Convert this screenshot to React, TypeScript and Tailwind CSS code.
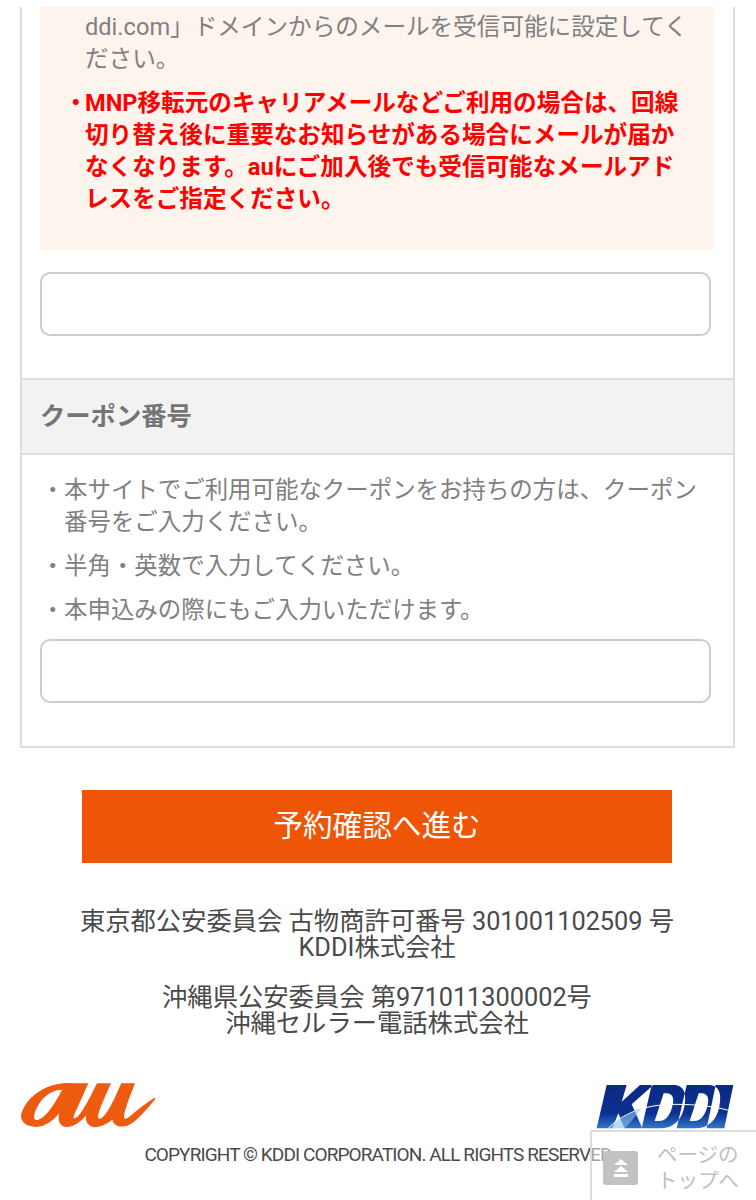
const coupons = [
  "本サイトでご利用可能なクーポンをお持ちの方は、クーポン番号をご入力ください。",
  "半角・英数で入力してください。",
  "本申込みの際にもご入力いただけます。",
];

export default function App() {
  return (
    <div className="w-[756px] h-[1200px] relative overflow-hidden bg-white pt-[7px] font-['Roboto','Noto_Sans_CJK_JP',sans-serif] text-[23.45px] leading-[32px] text-[#808080]">
      <div className="mx-5 w-[715px] border-x-2 border-b-2 border-[#dddddd] h-[741px]">
        <div className="mx-[18px] h-[243px] w-[674px] bg-[#fef4ee] pl-[24px] pr-[24px] text-[23.6px]">
          <p className="pt-[4px] pl-[21px]">ddi.com」ドメインからのメールを受信可能に設定してください。</p>
          <div className="mt-[12px] flex font-bold text-[#ff0000]">
            <span className="w-[21px] shrink-0">・</span>
            <p>MNP移転元のキャリアメールなどご利用の場合は、回線切り替え後に重要なお知らせがある場合にメールが届かなくなります。auにご加入後でも受信可能なメールアドレスをご指定ください。</p>
          </div>
        </div>
        <div className="mx-[18px] mt-[22px] h-[64px] w-[671px] rounded-[10px] border-2 border-[#cccccc] bg-white" />
        <div className="mt-[42px] h-[77px] border-y-2 border-[#dddddd] bg-[#f2f2f2] pl-[18px] flex items-center text-[25.3px] font-bold text-[#757575]">クーポン番号</div>
        <ul className="mt-[19px] pl-[19px] pr-[30px] flex flex-col gap-[12px]">
          {coupons.map((c) => (
            <li key={c} className="flex">
              <span className="w-[23px] shrink-0">・</span>
              <span>{c}</span>
            </li>
          ))}
        </ul>
        <div className="mx-[18px] mt-[13px] h-[64px] w-[671px] rounded-[10px] border-2 border-[#cccccc] bg-white" />
      </div>
      <button className="ml-[82px] mt-[42px] block h-[73px] w-[590px] bg-[#ee5506] pb-[2px] text-[29.6px] text-white">予約確認へ進む</button>
      <div className="mt-[46px] pr-[2px] text-center text-[25.3px] leading-[25.5px] text-[#4a4a4a]">
        <p>東京都公安委員会 古物商許可番号 301001102509 号</p>
        <p>KDDI株式会社</p>
        <p className="mt-[25px]">沖縄県公安委員会 第971011300002号</p>
        <p>沖縄セルラー電話株式会社</p>
      </div>
      <div className="mt-[39px] flex items-start justify-between pl-[10px] pr-[11px]">
        <svg width="155" height="65" viewBox="0 0 465 195" className="block">
          <path fill="#ee5a0e" stroke="#ee5a0e" strokeWidth="4" fillRule="evenodd" d="M195 27L232 27L190 120C185 135 195 135 205 125C225 105 245 60 262 27L300 27C280 70 262 110 262 125C262 137 275 135 285 122C305 100 320 60 335 27L372 27C355 70 340 105 340 125C340 137 350 135 365 122C385 105 410 85 435 70C415 95 390 125 365 143C345 157 312 158 308 130C285 152 255 160 240 150C228 143 228 125 232 115C210 140 185 158 165 153C148 150 145 130 150 110C125 140 95 160 65 152C35 148 30 125 40 105C60 60 120 18 195 27ZM160 42C120 40 90 70 75 105C65 130 72 142 88 135C115 125 140 80 160 42Z" />
        </svg>
        <svg width="160" height="65" viewBox="0 0 480 195" className="block">
          <defs>
            <linearGradient id="k" x1="0" y1="0" x2="0" y2="1">
              <stop offset="0" stopColor="#0b2a85" />
              <stop offset="0.65" stopColor="#0c2f90" />
              <stop offset="1" stopColor="#2f78c8" />
            </linearGradient>
          </defs>
          <path fill="url(#k)" fillRule="evenodd" d="M65 30H125L110 80L165 30H205L140 88L172 160H118L100 115L82 160H35ZM200 30H265C300 30 305 60 298 95C290 135 265 160 225 160H170ZM236 55L209 138H222C245 138 258 115 263 90C268 70 262 55 245 55ZM305 30H370C405 30 410 60 403 95C395 135 370 160 330 160H275ZM341 55L314 138H327C350 138 363 115 368 90C373 70 367 55 350 55ZM392 30H445L418 160H365Z" />
          <path fill="none" stroke="#ffffff" strokeWidth="3" d="M65 165C110 115 180 88 270 88C340 88 400 96 445 110" />
          <path fill="#8fc0ea" d="M72 160C100 130 130 112 170 100L150 125L120 160Z" opacity="0.6" />
        </svg>
      </div>
      <p className="mt-[3px] text-center text-[19px] leading-[24px] tracking-[-0.9px] text-[#4a4a4a] whitespace-nowrap">COPYRIGHT © KDDI CORPORATION. ALL RIGHTS RESERVED</p>
      <div className="absolute left-[590px] top-[1130px] h-[70px] w-[166px] border-l-2 border-t-2 border-[#dddddd] bg-white/50 flex items-center pl-[11px] pt-[4px] gap-[19px]">
        <div className="h-[34px] w-[35px] rounded-[3px] bg-[#c2c2c2] flex items-center justify-center">
          <svg width="20" height="22" viewBox="0 0 20 22"><path fill="#fff" d="M10 2l7 6H3zM10 9l7 6H3zM3 17h14v3H3z" /></svg>
        </div>
        <div className="text-[20.5px] leading-[26px] text-[#c0c0c0] whitespace-nowrap">ページの<br />トップへ</div>
      </div>
    </div>
  );
}
